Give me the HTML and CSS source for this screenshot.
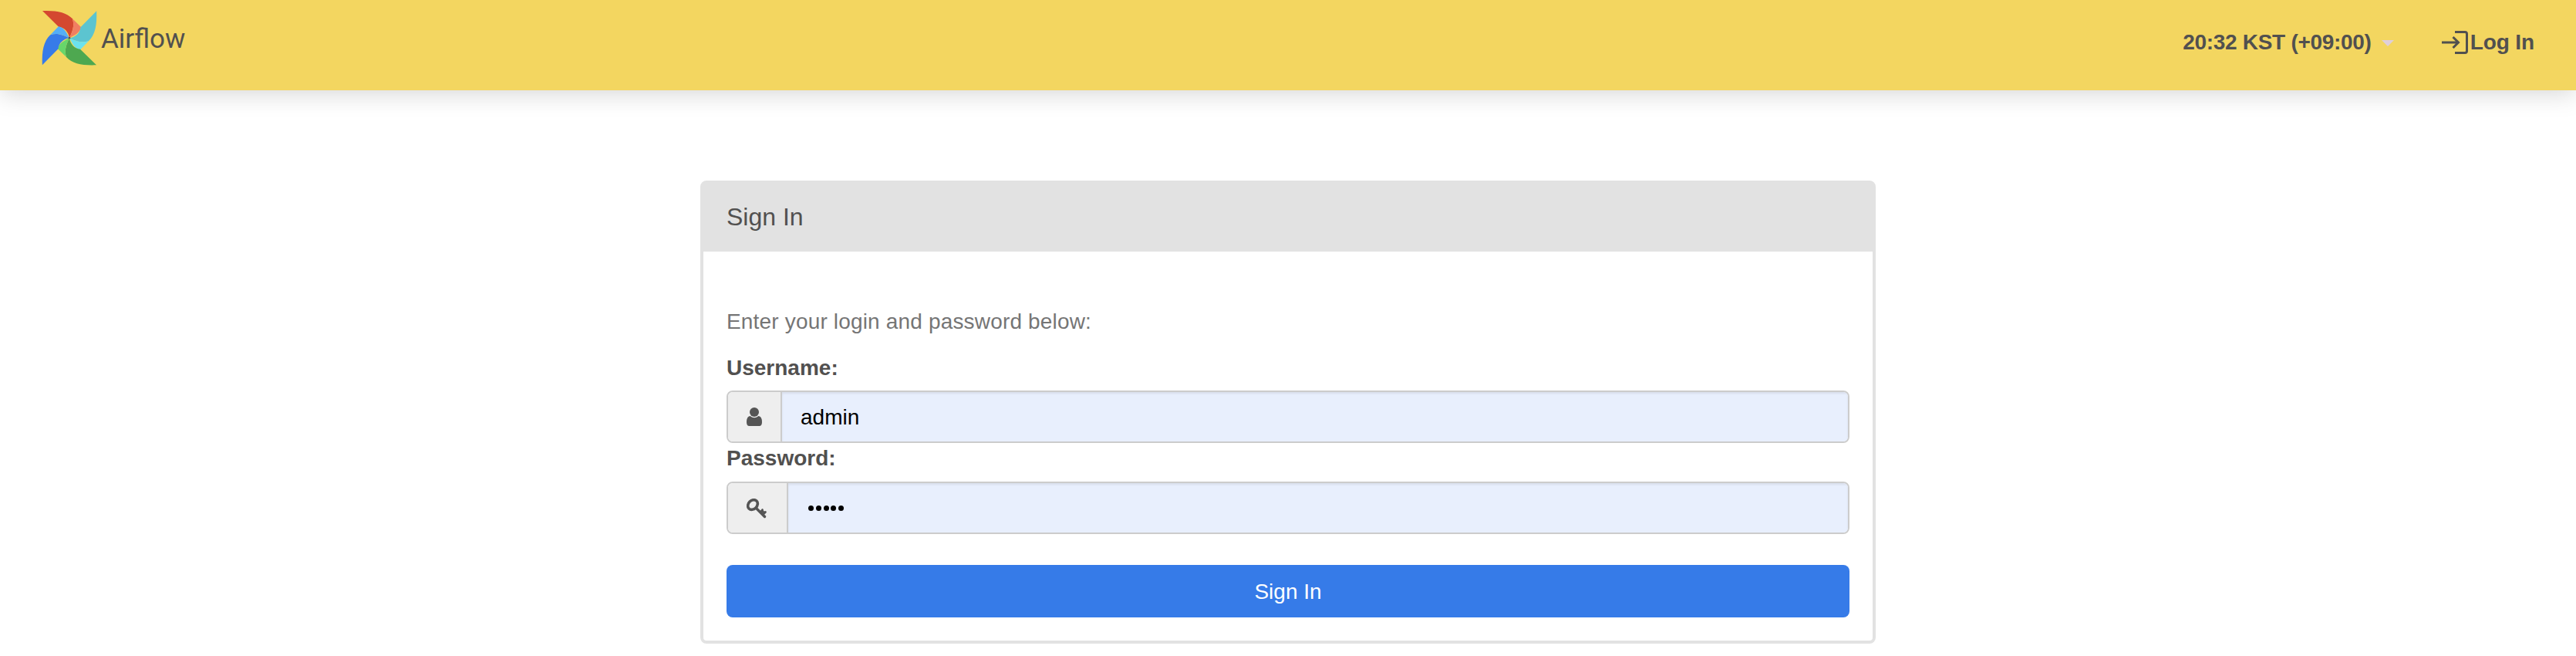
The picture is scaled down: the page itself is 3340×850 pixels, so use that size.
FILE: index.html
```
<!DOCTYPE html>
<html lang="en">
<head>
<meta charset="utf-8">
<title>Airflow - Sign In</title>
<link rel="stylesheet" href="styles.css">
</head>
<body>
<header class="navbar">
  <a class="brand" aria-label="Airflow">
    <svg class="pinwheel" viewBox="42 40 216 216" aria-hidden="true">
      <g fill="#d44830"><path d="M45 43C100 41 137 48 162 74C168 94 168 112 150 148.500C147 125 130 107 108 105Z"/><path fill="#f17e62" d="M162 74L195 106C193 129 165 140 150 148.500C168 112 168 94 162 74Z"/></g>
      <g fill="#5cc4d0" transform="rotate(90 150 148.500)"><path d="M45 43C100 41 137 48 162 74C168 94 168 112 150 148.500C147 125 130 107 108 105Z"/><path fill="#6be2ed" d="M162 74L195 106C193 129 165 140 150 148.500C168 112 168 94 162 74Z"/></g>
      <g fill="#4ea850" transform="rotate(180 150 148.500)"><path d="M45 43C100 41 137 48 162 74C168 94 168 112 150 148.500C147 125 130 107 108 105Z"/><path fill="#67d66b" d="M162 74L195 106C193 129 165 140 150 148.500C168 112 168 94 162 74Z"/></g>
      <g fill="#377be8" transform="rotate(270 150 148.500)"><path d="M45 43C100 41 137 48 162 74C168 94 168 112 150 148.500C147 125 130 107 108 105Z"/><path fill="#54aef7" d="M162 74L195 106C193 129 165 140 150 148.500C168 112 168 94 162 74Z"/></g>
      <circle cx="150" cy="148.500" r="4" fill="#51504f"/>
    </svg>
    <span class="wordmark">Airflow</span>
  </a>
  <nav class="nav-right">
    <a class="clock"><span class="clock-text">20:32 KST (+09:00)</span><span class="caret"></span></a>
    <a class="login">
      <svg class="login-icon" viewBox="0 0 34 30" fill="none" stroke="#51504f" aria-hidden="true"><path stroke-width="3" d="M17 1.500H30Q32.500 1.500 32.500 4V26Q32.500 28.500 30 28.500H17"/><path stroke-width="3" d="M0 15H21M14.500 8L21.500 15L14.500 22"/></svg>
      <span class="login-text">Log In</span>
    </a>
  </nav>
</header>
<main class="panel">
  <h1 class="panel-heading">Sign In</h1>
  <form class="panel-body">
    <p class="help">Enter your login and password below:</p>
    <label class="label" for="username">Username:</label>
    <div class="field">
      <span class="addon">
        <svg class="user-icon" viewBox="0 0 20 24" fill="#555" aria-hidden="true"><circle cx="10" cy="6" r="6"/><path d="M4.500 11Q10 15.500 15.500 11Q20 11.500 20 19Q20 24 16.500 24H3.500Q0 24 0 19Q0 11.500 4.500 11Z"/></svg>
      </span>
      <input class="input" id="username" type="text" value="admin">
    </div>
    <label class="label" for="password">Password:</label>
    <div class="field">
      <span class="addon addon-key">
        <svg class="key-icon" viewBox="0 0 26 26" fill="none" stroke="#555" stroke-linecap="round" aria-hidden="true"><ellipse cx="8" cy="8" rx="7" ry="5.600" stroke-width="3.600" transform="rotate(-45 8 8)"/><path stroke-width="3.400" d="M12.500 12.500L23.500 23.500"/><path stroke-width="2.600" d="M18.500 17L20.500 14.500M22 20L24.500 17.500M20.500 14.500L21 17.500L24.500 17.500"/></svg>
      </span>
      <span class="input dots" id="password"><i class="dot"></i><i class="dot"></i><i class="dot"></i><i class="dot"></i><i class="dot"></i></span>
    </div>
    <button class="submit" type="button">Sign In</button>
  </form>
</main>
</body>
</html>
```
FILE: styles.css
```
* {
  box-sizing: border-box;
}

body {
  margin: 0;
  background: #fff;
  color: #51504f;
  font-family: "Liberation Sans", Arial, sans-serif;
  font-size: 28px;
  line-height: 40px;
}

.navbar {
  display: flex;
  justify-content: space-between;
  height: 117px;
  padding: 0 54px;
  background: #f3d660;
  box-shadow: 0 4px 30px rgba(0, 0, 0, 0.17);
}

.brand {
  display: flex;
  align-items: flex-start;
}

.pinwheel {
  width: 72px;
  height: 72px;
  margin-top: 13px;
}

.wordmark {
  margin: 31px 0 0 5px;
  font-family: Roboto, sans-serif;
  font-size: 35px;
  line-height: 40px;
}

.nav-right {
  display: flex;
  align-items: flex-start;
  padding-top: 35px;
  font-weight: 700;
}

.clock {
  display: flex;
  align-items: center;
}

.clock-text {
  letter-spacing: -0.3px;
}

.caret {
  margin: 2px 0 0 13px;
  border: 8px solid transparent;
  border-top-color: #dfcfd9;
  border-bottom: 0;
}

.login {
  display: flex;
  margin-left: 62px;
}

.login-icon {
  width: 34px;
  height: 30px;
  margin: 5px 3px 0 0;
}

.login-text {
  letter-spacing: -0.1px;
}

.panel {
  width: 1524px;
  height: 600px;
  margin: 117px auto 0;
  border: 4px solid #e2e2e2;
  border-radius: 8px;
}

.panel-heading {
  height: 88px;
  margin: 0;
  padding: 23px 30px 21px;
  background: #e2e2e2;
  font-size: 32px;
  font-weight: 400;
}

.panel-body {
  padding: 71px 30px 30px;
}

.help {
  margin: 0 0 20px;
  color: #757575;
  letter-spacing: 0.17px;
}

.label {
  display: block;
  height: 50px;
  font-weight: 700;
}

.help + .label {
  height: 49px;
}

.field {
  display: flex;
  height: 68px;
  border: 2px solid #ccc;
  border-radius: 8px;
  overflow: hidden;
}

.addon {
  display: flex;
  flex: none;
  width: 70px;
  padding: 20px 0 0 24px;
  border-right: 2px solid #ccc;
  background: #eee;
}

.addon-key {
  width: 78px;
}

.user-icon {
  width: 20px;
  height: 24px;
}

.key-icon {
  width: 26px;
  height: 26px;
}

.input {
  flex: 1;
  min-width: 0;
  padding: 2px 24px 0;
  border: 0;
  background: #e8effd;
  box-shadow: inset 0 2px 3px rgba(0, 0, 0, 0.075);
  color: #000;
  font: inherit;
}

.dots {
  display: flex;
  align-items: center;
  gap: 2.8px;
  padding: 0 26px;
}

.dot {
  width: 7px;
  height: 7px;
  border-radius: 50%;
  background: #000;
}

.submit {
  display: block;
  width: 100%;
  height: 68px;
  margin-top: 40px;
  padding: 2px 0 0;
  border: 0;
  border-radius: 8px;
  background: #367be8;
  color: #fff;
  font: inherit;
}
```
